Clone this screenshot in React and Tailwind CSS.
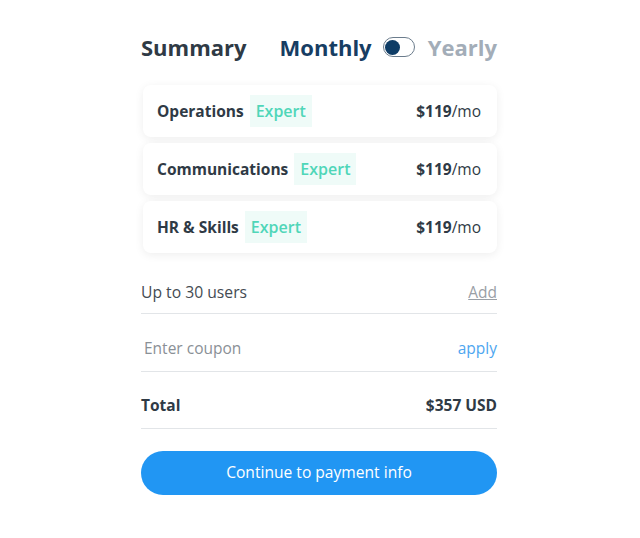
import React from "react";

const items = ["Operations", "Communications", "HR & Skills"];

export default function App() {
  return (
    <div className="w-[640px] h-[538px] bg-white flex" style={{ fontFamily: '"Open Sans", sans-serif' }}>
      <div className="w-[356px] ml-[141px] pt-[32px] flex flex-col">
        <div className="flex items-center h-[30px]">
          <span className="text-[22px] font-bold text-[#2f3a45]">Summary</span>
          <span className="ml-[33px] text-[22px] font-bold text-[#173d63]">Monthly</span>
          <span className="ml-[11px] w-[32px] h-[20px] rounded-full border-[1.5px] border-[#6b7c8c] flex items-center pl-[1px]">
            <span className="w-[15px] h-[15px] rounded-full bg-[#0f3d66]"></span>
          </span>
          <span className="ml-auto text-[22px] font-bold text-[#a3adb8]">Yearly</span>
        </div>
        <div className="mt-[23px] flex flex-col gap-[6px] pl-[2px]">
          {items.map((name) => (
            <div key={name} className="h-[52px] rounded-[8px] bg-white shadow-[0_2px_10px_rgba(0,0,0,0.07)] flex items-center pl-[14px] pr-[16px]">
              <span className="pt-[2px] text-[15.5px] font-bold text-[#2f3a45]">{name}</span>
              <span className="ml-[6px] h-[32px] px-[6px] flex items-center bg-[#effbf8] text-[16px] font-semibold text-[#4fd6b8]">Expert</span>
              <span className="ml-auto pt-[2px] text-[15.5px] text-[#2f3a45]"><span className="font-bold">$119</span>/mo</span>
            </div>
          ))}
        </div>
        <div className="mt-[21px] h-[40px] flex items-center justify-between border-b border-[#e2e5e8] pb-[2px]">
          <span className="text-[15.7px] text-[#444b52]">Up to 30 users</span>
          <span className="text-[15.5px] text-[#9aa0a6] underline">Add</span>
        </div>
        <div className="h-[58px] flex items-center justify-between border-b border-[#e2e5e8] pl-[3px] pt-[12px]">
          <span className="text-[15.5px] text-[#8a9096]">Enter coupon</span>
          <span className="text-[15.5px] text-[#4ea6f0]">apply</span>
        </div>
        <div className="h-[57px] flex items-center justify-between border-b border-[#e2e5e8] pt-[12px]">
          <span className="text-[15.5px] font-bold text-[#2f3a45]">Total</span>
          <span className="text-[15.5px] font-bold text-[#2f3a45]">$357 USD</span>
        </div>
        <button className="mt-[22px] h-[44px] w-full rounded-full bg-[#2196f3] text-white text-[15.6px] flex items-center justify-center">
          Continue to payment info
        </button>
      </div>
    </div>
  );
}
